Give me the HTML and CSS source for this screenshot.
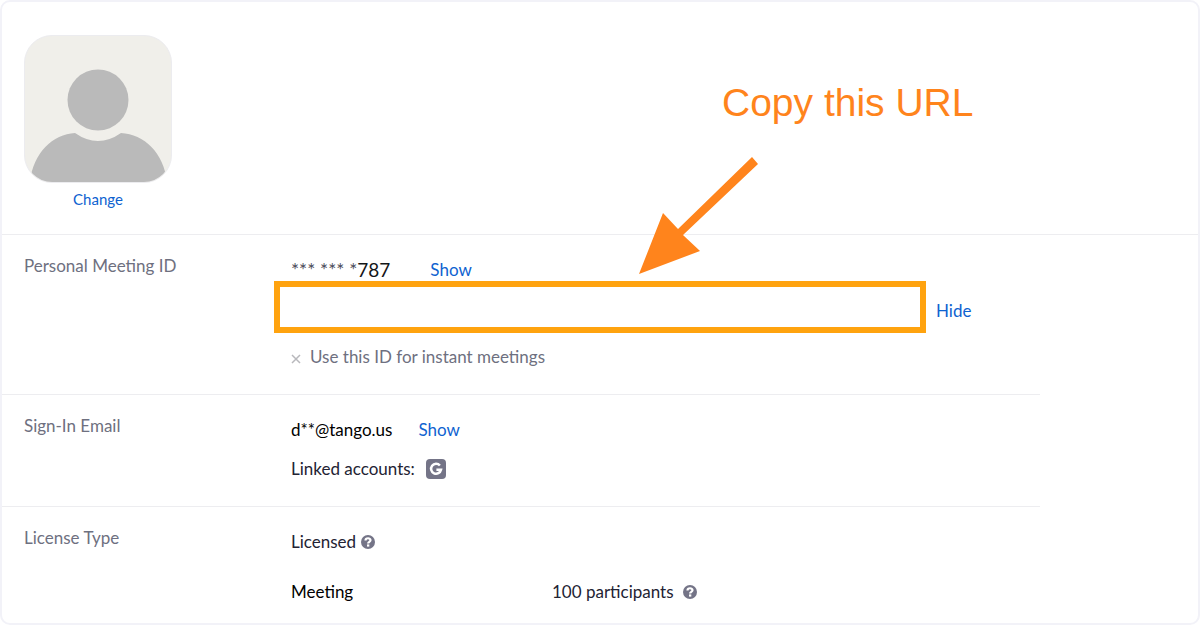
FILE: index.html
```
<!DOCTYPE html>
<html lang="en">
<head>
    <meta charset="UTF-8">
    <meta name="viewport" content="width=device-width, initial-scale=1.0">
    <title>Profile</title>
    <link rel="stylesheet" href="styles.css">
</head>
<body>
    <main class="card">
        <section class="profile">
            <div class="avatar-group">
                <svg class="avatar" viewBox="0 0 146 146" role="img" aria-label="Profile picture">
                    <circle cx="73" cy="64" r="30.5" fill="#bababa"/>
                    <path d="M5 146 C8 117 28 98 50 97 Q73 113 96 97 C119 98 139 117 142 146 Z" fill="#bababa"/>
                </svg>
                <a class="change" href="#">Change</a>
            </div>
        </section>

        <section class="row">
            <div class="label">Personal Meeting ID</div>
            <div class="content">
                <div class="line">
                    <span class="meeting-id"><span class="masked">*** *** *</span>787</span>
                    <a class="show-id" href="#">Show</a>
                </div>
                <div class="url-line">
                    <div class="url-box"></div>
                    <a class="hide" href="#">Hide</a>
                </div>
                <div class="line instant">
                    <svg class="cross" viewBox="0 0 10 10" aria-hidden="true">
                        <path d="M1 1 L9 9 M9 1 L1 9" stroke="#b8b8bc" stroke-width="1.5"/>
                    </svg>
                    <span>Use this ID for instant meetings</span>
                </div>
            </div>
        </section>

        <section class="row">
            <div class="label">Sign-In Email</div>
            <div class="content">
                <div class="line">
                    <span class="strong">d**@tango.us</span>
                    <a class="show-email" href="#">Show</a>
                </div>
                <div class="line linked">
                    <span>Linked accounts:</span>
                    <svg class="google" viewBox="0 0 20 20" role="img" aria-label="Google">
                        <rect width="20" height="20" rx="4" fill="#747487"/>
                        <path d="M13.9 6.5 A5 5 0 1 0 15 10.8 H10.4" fill="none" stroke="#fff" stroke-width="2.5"/>
                    </svg>
                </div>
            </div>
        </section>

        <section class="row">
            <div class="label">License Type</div>
            <div class="content">
                <div class="line licensed">
                    <span>Licensed</span>
                    <svg class="help" viewBox="0 0 14 14" role="img" aria-label="Help">
                        <circle cx="7" cy="7" r="7" fill="#747487"/>
                        <path d="M4.5 5.5 C4.6 2.5 9.6 2.6 9.5 5.3 C9.4 6.9 7.1 6.8 7.1 8.6" fill="none" stroke="#fff" stroke-width="2.2"/>
                        <rect x="6" y="9.4" width="2.3" height="2.2" fill="#fff"/>
                    </svg>
                </div>
                <div class="plan">
                    <span class="strong">Meeting</span>
                    <div class="line participants">
                        <span>100 participants</span>
                        <svg class="help" viewBox="0 0 14 14" role="img" aria-label="Help">
                            <circle cx="7" cy="7" r="7" fill="#747487"/>
                            <path d="M4.5 5.5 C4.6 2.5 9.6 2.6 9.5 5.3 C9.4 6.9 7.1 6.8 7.1 8.6" fill="none" stroke="#fff" stroke-width="2.2"/>
                            <rect x="6" y="9.4" width="2.3" height="2.2" fill="#fff"/>
                        </svg>
                    </div>
                </div>
            </div>
        </section>

        <!-- callout pointing at the URL box -->
        <div class="callout">
            <div class="callout-text">Copy this URL</div>
            <svg class="arrow" viewBox="0 0 120 118" aria-hidden="true">
                <path d="M115 0 L121 7 L46 78 L63 94 L2 117 L26 56 L41 72 Z" fill="#ff841c"/>
            </svg>
        </div>
    </main>
</body>
</html>
```
FILE: styles.css
```
* { box-sizing: border-box; }
body { margin: 0; background-color: #fff; color: #232333; font-family: Lato, "Liberation Sans", sans-serif; font-size: 17px; line-height: 22px; }
a { color: #0e62d0; text-decoration: none; }
a:hover { text-decoration: underline; }
svg { display: block; flex: none; }

.card { position: relative; min-height: 100vh; border: 2px solid #f2f2f8; border-radius: 10px; overflow: hidden; }
.profile { padding: 33px 22px 24px; border-bottom: 1px solid #ededf0; }
.avatar-group { display: flex; flex-direction: column; align-items: center; gap: 5px; width: 148px; }
.avatar { width: 148px; height: 148px; background-color: #f0efea; border: 1px solid #ececef; border-radius: 28px; }
.change { font-size: 15px; }

.row { display: grid; grid-template-columns: 250px 1fr; max-width: 1038px; padding: 20px 0 26px 22px; border-bottom: 1px solid #ededf0; }
.row:last-of-type { padding-bottom: 16px; border-bottom: none; }
.label { color: #6e7080; }
.content { padding-top: 4px; }
.line { display: flex; align-items: center; padding-left: 17px; }
.strong { color: #000; }
.meeting-id { color: #131619; font-size: 19px; }
.masked { color: #4a4a58; }
.show-id { margin-left: 40px; }
.url-line { display: flex; align-items: center; gap: 10px; }
.url-box { width: 652px; height: 52px; border: 6px solid #ffa30f; }
.hide { padding-top: 8px; }
.instant { gap: 9px; margin-top: 13px; color: #6e7080; }
.cross { width: 10px; height: 10px; margin-top: 4px; }
.show-email { margin-left: 26px; }
.linked { gap: 11px; margin-top: 17px; }
.google { width: 20px; height: 20px; }
.help { width: 14px; height: 14px; }
.licensed { gap: 5px; }
.plan { display: grid; grid-template-columns: 244px 1fr; margin-top: 28px; padding-left: 17px; }
.participants { gap: 9px; }

/* lies over the profile and meeting rows */
.callout { position: absolute; top: 76px; left: 635px; color: #ff841c; }
.callout-text { padding-left: 85px; font-family: "Liberation Sans", sans-serif; font-size: 39px; line-height: 50px; white-space: nowrap; }
.arrow { width: 120px; height: 118px; margin-top: 29px; overflow: visible; }
```
